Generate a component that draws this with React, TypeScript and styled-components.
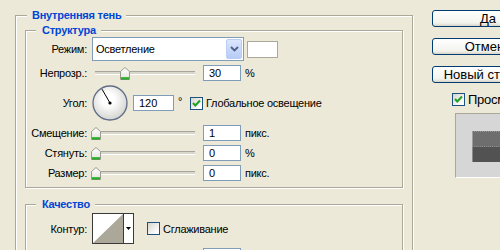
import React from 'react';
import styled, { createGlobalStyle } from 'styled-components';

const GlobalStyle = createGlobalStyle`
  html, body {
    margin: 0;
    padding: 0;
    background: #ece9d8;
  }
  body {
    font-family: "Liberation Sans", Arial, sans-serif;
    font-size: 11px;
    letter-spacing: -0.25px;
    color: #000;
  }
`;

const Window = styled.div`
  display: flex;
  align-items: flex-start;
  width: 500px;
  height: 250px;
  overflow: hidden;
  padding: 9px 0 0 15px;
  box-sizing: border-box;
  background: #ece9d8;
`;

const Group = styled.fieldset<{ $width?: number; $top?: number }>`
  flex-shrink: 0;
  margin: ${p => p.$top || 0}px 0 0;
  padding: 0;
  min-width: 0;
  box-sizing: border-box;
  border: 1px solid #aca899;
  box-shadow: inset 1px 1px 0 #fff, 1px 1px 0 #fff;
  ${p => (p.$width ? `width: ${p.$width}px;` : '')}
`;

const Legend = styled.legend<{ $indent: number; $left: number }>`
  margin-left: ${p => p.$indent}px;
  padding: 0 5px 0 ${p => p.$left}px;
  line-height: 13px;
  font-size: 11px;
  font-weight: bold;
  color: #0046d5;
  background: #ece9d8;
`;

const GroupBody = styled.div<{ $pad: string }>`
  display: flex;
  flex-direction: column;
  gap: 4px;
  padding: ${p => p.$pad};
`;

const Row = styled.div<{ $h: number }>`
  display: flex;
  align-items: center;
  height: ${p => p.$h}px;
  flex-shrink: 0;
`;

const Label = styled.span`
  width: 61px;
  margin-right: 5px;
  text-align: right;
  white-space: nowrap;
  flex-shrink: 0;
`;

const Select = styled.div`
  display: flex;
  align-items: center;
  width: 152px;
  height: 24px;
  box-sizing: border-box;
  border: 1px solid #7f9db9;
  background: #fff;
  padding: 0 1px 0 3px;
`;

const SelectText = styled.span`
  flex: 1;
  font-size: 11px;
`;

const SelectButton = styled.span`
  display: flex;
  align-items: center;
  justify-content: center;
  width: 16px;
  height: 20px;
  box-sizing: border-box;
  border: 1px solid #bccdf4;
  border-radius: 2px;
  background: linear-gradient(#dce6fd, #b6cbf7);
`;

const Swatch = styled.div`
  width: 31px;
  height: 17px;
  margin-left: 3px;
  box-sizing: border-box;
  border: 1px solid #aca899;
  background: #fff;
`;

const SliderBox = styled.div`
  position: relative;
  display: flex;
  align-items: center;
  width: 106px;
  height: 16px;
  margin-right: 5px;
  flex-shrink: 0;
`;

const Track = styled.div`
  flex: 1;
  margin: 0 3px;
  height: 2px;
  border-top: 1px solid #a7a69c;
  border-bottom: 1px solid #fff;
  background: #d9d7cb;
`;

const Thumb = styled.svg`
  position: absolute;
  top: 2px;
`;

const NumInput = styled.input<{ $w: number }>`
  width: ${p => p.$w}px;
  height: 16px;
  box-sizing: border-box;
  margin: 0;
  border: 1px solid #7f9db9;
  background: #fff;
  padding: 0 0 0 5px;
  font-family: "Liberation Sans", Arial, sans-serif;
  font-size: 11px;
  color: #000;
  outline: none;
  flex-shrink: 0;
`;

const Unit = styled.span`
  margin-left: 4px;
  white-space: nowrap;
`;

const Degree = styled.span`
  width: 12px;
  margin-left: 4px;
  margin-bottom: 5px;
`;

const Dial = styled.svg`
  margin-right: 5px;
  flex-shrink: 0;
`;

const CheckBox = styled.span`
  display: inline-flex;
  width: 13px;
  height: 13px;
  box-sizing: border-box;
  border: 1px solid #1c5180;
  background: linear-gradient(135deg, #d6d5cc, #fff 85%);
  flex-shrink: 0;
`;

const CheckLabel = styled.span<{ $size?: number }>`
  margin-left: 3px;
  font-size: ${p => p.$size || 11}px;
  white-space: nowrap;
`;

const Check = styled.label<{ $gap?: number; $top?: number }>`
  display: flex;
  align-items: center;
  height: 13px;
  margin: ${p => p.$top || 0}px 0 0 ${p => p.$gap || 0}px;
`;

const ContourPicker = styled.div`
  display: flex;
  width: 42px;
  height: 31px;
  box-sizing: border-box;
  border: 1px solid #3a3a3a;
  background: #fff;
  flex-shrink: 0;
`;

const ContourArrow = styled.span`
  display: flex;
  align-items: center;
  justify-content: center;
  flex: 1;
  border-left: 1px solid #3a3a3a;
`;

const Side = styled.div`
  display: flex;
  flex-direction: column;
  align-items: flex-start;
  flex-shrink: 0;
  margin-left: 19px;
  padding-top: 1px;
`;

const Button = styled.button`
  width: 112px;
  height: 17px;
  margin: 0 0 11px;
  padding: 0;
  box-sizing: border-box;
  border: 1px solid #003c74;
  border-radius: 3px;
  background: linear-gradient(#fff, #f3f3ee 80%, #d8d3c6);
  font-family: "Liberation Sans", Arial, sans-serif;
  font-size: 13px;
  line-height: 15px;
  color: #000;
`;

const Preview = styled.div`
  width: 80px;
  height: 65px;
  margin: 7px 0 0 23px;
  padding: 17px 0 0 16px;
  box-sizing: border-box;
  border-top: 1px solid #aca899;
  border-left: 1px solid #aca899;
  border-bottom: 1px solid #fff;
  background: #d6d6d6;
`;

const PreviewTop = styled.div`
  height: 14px;
  border-top: 1px dotted #9a9a9a;
  border-bottom: 1px dotted #8c8c8c;
  border-left: 1px solid #9c9c9c;
  background: #6e6e6e;
`;

const PreviewBottom = styled.div`
  height: 15px;
  border-left: 1px solid #8a8a8a;
  background: #525252;
`;

const SliderThumb = ({ left }: { left: number }) => (
  <Thumb width="10" height="13" viewBox="0 0 10 13" style={{ left }}>
    <defs>
      <linearGradient id="tg" x1="0" y1="0" x2="0" y2="1">
        <stop offset="0" stopColor="#ffffff" />
        <stop offset="1" stopColor="#e4e3dc" />
      </linearGradient>
    </defs>
    <path d="M0.5 4.5 L5 0.5 L9.5 4.5 V12.5 H0.5 Z" fill="url(#tg)" stroke="#9a9a8e" />
    <rect x="1" y="10" width="8" height="2" fill="#3fbf3f" />
    <rect x="1" y="11.5" width="8" height="1" fill="#1f9a1f" />
  </Thumb>
);

const Slider = ({ value, max }: { value: number; max: number }) => (
  <SliderBox>
    <Track />
    <SliderThumb left={-1 + (value / max) * 98} />
  </SliderBox>
);

const Tick = () => (
  <svg width="11" height="11" viewBox="0 0 11 11">
    <path d="M2 5 L4.3 7.5 L9 2.5" fill="none" stroke="#21a121" strokeWidth="2" />
  </svg>
);

const XpCheck = ({
  checked,
  text,
  size,
  gap,
  top,
}: {
  checked?: boolean;
  text: string;
  size?: number;
  gap?: number;
  top?: number;
}) => (
  <Check $gap={gap} $top={top}>
    <CheckBox>{checked && <Tick />}</CheckBox>
    <CheckLabel $size={size}>{text}</CheckLabel>
  </Check>
);

const sliderRows = [
  { label: 'Смещение:', value: 1, max: 250, unit: 'пикс.' },
  { label: 'Стянуть:', value: 0, max: 100, unit: '%' },
  { label: 'Размер:', value: 0, max: 250, unit: 'пикс.' },
];

const App = () => {
  const angle = 120;
  const rad = (angle * Math.PI) / 180;

  return (
    <>
      <GlobalStyle />
      <Window>
        <Group $width={398}>
          <Legend $indent={11} $left={5}>Внутренняя тень</Legend>
          <GroupBody $pad="2px 9px 0">
            <Group>
              <Legend $indent={10} $left={6}>Структура</Legend>
              <GroupBody $pad="0 0 6px">
                <Row $h={24}>
                  <Label>Режим:</Label>
                  <Select>
                    <SelectText>Осветление</SelectText>
                    <SelectButton>
                      <svg width="9" height="6" viewBox="0 0 9 6">
                        <path d="M1 1 L4.5 4.5 L8 1" fill="none" stroke="#4d6185" strokeWidth="1.8" />
                      </svg>
                    </SelectButton>
                  </Select>
                  <Swatch />
                </Row>
                <Row $h={16}>
                  <Label>Непрозр.:</Label>
                  <Slider value={30} max={100} />
                  <NumInput $w={38} defaultValue="30" readOnly />
                  <Unit>%</Unit>
                </Row>
                <Row $h={36}>
                  <Label>Угол:</Label>
                  <Dial width="36" height="36" viewBox="0 0 36 36">
                    <defs>
                      <radialGradient id="dg" cx="0.45" cy="0.4" r="0.6">
                        <stop offset="0.3" stopColor="#ffffff" />
                        <stop offset="1" stopColor="#d4d4d0" />
                      </radialGradient>
                    </defs>
                    <circle cx="18" cy="18" r="17" fill="url(#dg)" stroke="#606d87" strokeWidth="1.3" />
                    <line
                      x1="18"
                      y1="18"
                      x2={18 + Math.cos(rad) * 16}
                      y2={18 - Math.sin(rad) * 16}
                      stroke="#000"
                      strokeWidth="1"
                    />
                    <circle cx="18" cy="18" r="1.6" fill="#000" />
                  </Dial>
                  <NumInput $w={41} defaultValue={String(angle)} readOnly />
                  <Degree>°</Degree>
                  <XpCheck checked text="Глобальное освещение" />
                </Row>
                {sliderRows.map(r => (
                  <Row $h={16} key={r.label}>
                    <Label>{r.label}</Label>
                    <Slider value={r.value} max={r.max} />
                    <NumInput $w={38} defaultValue={String(r.value)} readOnly />
                    <Unit>{r.unit}</Unit>
                  </Row>
                ))}
              </GroupBody>
            </Group>
            <Group $top={6}>
              <Legend $indent={10} $left={6}>Качество</Legend>
              <GroupBody $pad="2px 0 6px">
                <Row $h={31}>
                  <Label>Контур:</Label>
                  <ContourPicker>
                    <svg width="30" height="29" viewBox="0 0 30 29">
                      <rect width="30" height="29" fill="#fff" />
                      <polygon points="0,29 30,0 30,29" fill="#aca899" />
                    </svg>
                    <ContourArrow>
                      <svg width="5" height="3" viewBox="0 0 5 3">
                        <polygon points="0,0 5,0 2.5,3" fill="#000" />
                      </svg>
                    </ContourArrow>
                  </ContourPicker>
                  <XpCheck text="Сглаживание" gap={13} />
                </Row>
                <Row $h={16}>
                  <Label />
                  <Slider value={0} max={100} />
                  <NumInput $w={38} readOnly />
                </Row>
              </GroupBody>
            </Group>
          </GroupBody>
        </Group>
        <Side>
          <Button>Да</Button>
          <Button>Отмена</Button>
          <Button>Новый стиль...</Button>
          <XpCheck checked text="Просмотр" size={13} gap={20} top={-1} />
          <Preview>
            <PreviewTop />
            <PreviewBottom />
          </Preview>
        </Side>
      </Window>
    </>
  );
};

export default App;
